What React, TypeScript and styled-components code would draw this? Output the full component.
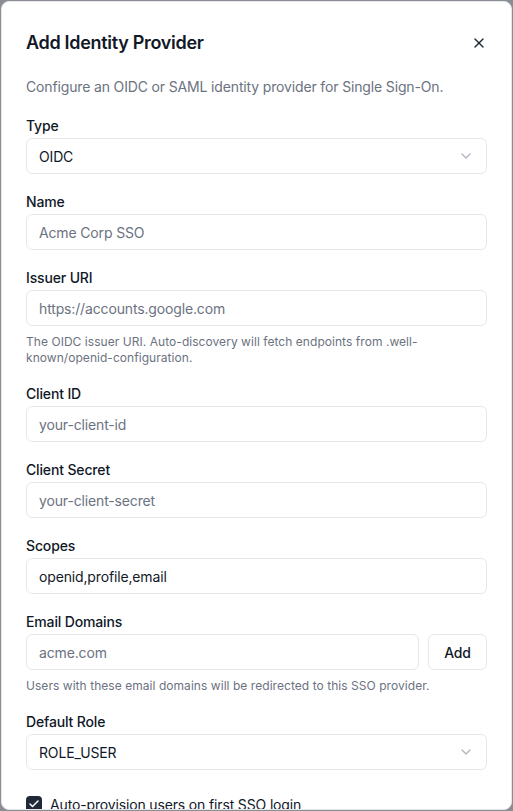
import React from "react";
import styled, { createGlobalStyle } from "styled-components";
import { X, ChevronDown, Check } from "lucide-react";

const GlobalStyle = createGlobalStyle`
  html, body {
    margin: 0;
    padding: 0;
    height: 100%;
    background: #8a8d93;
  }
  body {
    font-family: Inter, "Noto Sans", "Liberation Sans", sans-serif;
    -webkit-font-smoothing: antialiased;
    letter-spacing: -0.15px;
  }
  * {
    box-sizing: border-box;
  }
`;

const Dialog = styled.div`
  margin: 1px;
  height: 809px;
  background: #ffffff;
  border: 1px solid #e5e7eb;
  border-radius: 8px;
  overflow: hidden;
  color: #111827;
`;

const Content = styled.div`
  padding: 24px 24px 0 24px;
`;

const Header = styled.div`
  display: flex;
  align-items: center;
  justify-content: space-between;
  min-height: 34px;
`;

const Title = styled.h2`
  margin: 0;
  font-size: 18px;
  line-height: 28px;
  font-weight: 600;
  letter-spacing: -0.3px;
`;

const CloseButton = styled.button`
  display: flex;
  align-items: center;
  justify-content: center;
  width: 20px;
  height: 20px;
  padding: 0;
  margin-right: -2px;
  border: none;
  background: transparent;
  color: #1f2937;
  cursor: pointer;
`;

const Description = styled.p`
  margin: 17px 0 0 0;
  font-size: 14px;
  line-height: 20px;
  color: #6b7280;
`;

const Form = styled.div`
  margin-top: 19px;
  display: flex;
  flex-direction: column;
  gap: 18px;
`;

const Field = styled.div`
  display: flex;
  flex-direction: column;
`;

const Label = styled.label`
  font-size: 14px;
  line-height: 20px;
  font-weight: 500;
  color: #111827;
  margin-bottom: 2px;
`;

const Control = styled.div<{ $muted?: boolean; $grow?: boolean }>`
  display: flex;
  align-items: center;
  justify-content: space-between;
  flex: ${(p) => (p.$grow ? "1 1 auto" : "0 0 auto")};
  height: 36px;
  padding: 0 12px;
  border: 1px solid #e5e7eb;
  border-radius: 6px;
  background: #ffffff;
  font-size: 14px;
  color: ${(p) => (p.$muted ? "#6b7280" : "#111827")};
`;

const ChevronIcon = styled(ChevronDown)`
  color: #9ca3af;
  opacity: 0.8;
`;

const Help = styled.p`
  margin: 8px 0 0 0;
  font-size: 12px;
  line-height: 16px;
  letter-spacing: 0.05px;
  color: #6b7280;
`;

const Row = styled.div`
  display: flex;
  gap: 9px;
`;

const AddButton = styled.button`
  flex: 0 0 auto;
  height: 36px;
  width: 59px;
  padding: 0;
  border: 1px solid #e5e7eb;
  border-radius: 6px;
  background: #ffffff;
  font-family: inherit;
  letter-spacing: inherit;
  font-size: 14px;
  font-weight: 500;
  color: #111827;
`;

const CheckRow = styled.div`
  display: flex;
  align-items: center;
  gap: 8px;
  margin-top: 24px;
  height: 20px;
  font-size: 14px;
  color: #111827;
`;

const CheckBox = styled.span`
  display: flex;
  align-items: center;
  justify-content: center;
  width: 16px;
  height: 16px;
  border-radius: 4px;
  background: #1f2937;
  color: #ffffff;
`;

type FieldDef = {
  label: string;
  value: string;
  muted?: boolean;
  select?: boolean;
  help?: string;
};

const fields: FieldDef[] = [
  { label: "Type", value: "OIDC", select: true },
  { label: "Name", value: "Acme Corp SSO", muted: true },
  {
    label: "Issuer URI",
    value: "https://accounts.google.com",
    muted: true,
    help: "The OIDC issuer URI. Auto-discovery will fetch endpoints from .well-known/openid-configuration.",
  },
  { label: "Client ID", value: "your-client-id", muted: true },
  { label: "Client Secret", value: "your-client-secret", muted: true },
  { label: "Scopes", value: "openid,profile,email" },
];

export default function App() {
  return (
    <>
      <GlobalStyle />
      <Dialog>
        <Content>
          <Header>
            <Title>Add Identity Provider</Title>
            <CloseButton aria-label="Close">
              <X size={16} strokeWidth={2} />
            </CloseButton>
          </Header>
          <Description>
            Configure an OIDC or SAML identity provider for Single Sign-On.
          </Description>
          <Form>
            {fields.map((f) => (
              <Field key={f.label}>
                <Label>{f.label}</Label>
                <Control $muted={f.muted}>
                  <span>{f.value}</span>
                  {f.select && <ChevronIcon size={16} />}
                </Control>
                {f.help && <Help>{f.help}</Help>}
              </Field>
            ))}
            <Field>
              <Label>Email Domains</Label>
              <Row>
                <Control $muted $grow>
                  acme.com
                </Control>
                <AddButton>Add</AddButton>
              </Row>
              <Help>
                Users with these email domains will be redirected to this SSO
                provider.
              </Help>
            </Field>
            <Field>
              <Label>Default Role</Label>
              <Control>
                <span>ROLE_USER</span>
                <ChevronIcon size={16} />
              </Control>
            </Field>
          </Form>
          <CheckRow>
            <CheckBox>
              <Check size={12} strokeWidth={3} />
            </CheckBox>
            Auto-provision users on first SSO login
          </CheckRow>
        </Content>
      </Dialog>
    </>
  );
}
